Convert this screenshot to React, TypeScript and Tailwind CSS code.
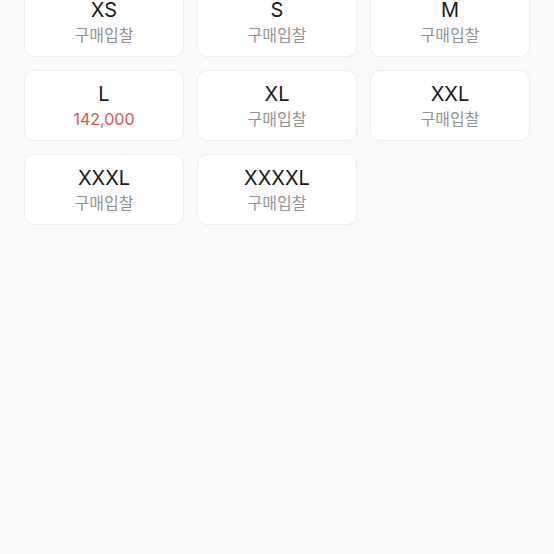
import React from 'react';

type Size = { label: string; price?: string };

const sizes: Size[] = [
  { label: 'XS' },
  { label: 'S' },
  { label: 'M' },
  { label: 'L', price: '142,000' },
  { label: 'XL' },
  { label: 'XXL' },
  { label: 'XXXL' },
  { label: 'XXXXL' },
];

function SizeCard({ label, price }: Size) {
  return (
    <button className="h-[71px] flex flex-col items-center justify-center gap-[3px] rounded-[10px] bg-white border border-[#ededed]">
      <span className="text-[20px] leading-[24px] text-[#1a1a1a]">{label}</span>
      {price ? (
        <span className="text-[16px] leading-[20px] text-[#dc5450]">{price}</span>
      ) : (
        <span className="text-[16px] leading-[20px] text-[#929292]">구매입찰</span>
      )}
    </button>
  );
}

export default function App() {
  return (
    <div
      className="min-h-[554px] bg-[#f9f9f9] px-6 overflow-hidden"
      style={{ fontFamily: 'Inter, "Noto Sans CJK KR", sans-serif' }}
    >
      <div className="grid grid-cols-3 gap-x-[13px] gap-y-[13px] mt-[-14px]">
        {sizes.map(s => (
          <SizeCard key={s.label} {...s} />
        ))}
      </div>
    </div>
  );
}
